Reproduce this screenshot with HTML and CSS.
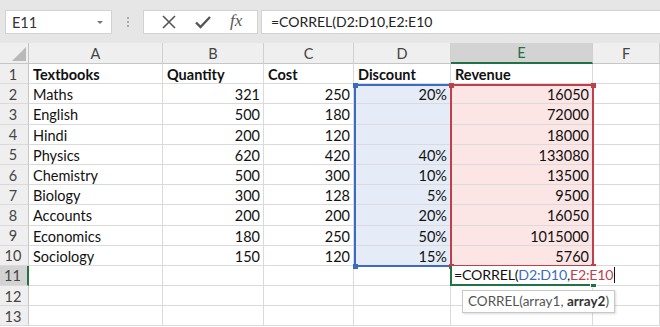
FILE: index.html
```html
<!DOCTYPE html>
<html lang="en">
<head>
    <meta charset="UTF-8">
    <title>CORREL - Excel</title>
    <link rel="stylesheet" href="styles.css">
</head>
<body>

    <div class="toolbar">
        <div class="namebox">
            <span>E11</span>
            <svg class="caret" width="8" height="5" viewBox="0 0 8 5"><path d="M1 1 L4 4 L7 1 Z" fill="#777"/></svg>
        </div>
        <div class="grip"><i></i><i></i><i></i></div>
        <div class="buttons">
            <svg width="16" height="16" viewBox="0 0 16 16"><path d="M2 2 L14 14 M14 2 L2 14" stroke="#555" stroke-width="1.6" fill="none"/></svg>
            <svg width="18" height="16" viewBox="0 0 18 16"><path d="M2 8.5 L6.5 13 L16 3" stroke="#555" stroke-width="2.4" fill="none"/></svg>
            <span class="fx">fx</span>
        </div>
        <div class="formula">=CORREL(D2:D10,E2:E10</div>
    </div>

    <div class="sheet">
        <div class="corner"><svg width="14" height="14" viewBox="0 0 14 14"><path d="M14 0 L14 14 L0 14 Z" fill="#b9b9b9"/></svg></div>
        <div class="colhead">A</div>
        <div class="colhead">B</div>
        <div class="colhead">C</div>
        <div class="colhead">D</div>
        <div class="colhead active">E</div>
        <div class="colhead">F</div>

        <div class="rowhead">1</div>
        <div class="cell b">Textbooks</div><div class="cell b">Quantity</div><div class="cell b">Cost</div><div class="cell b">Discount</div><div class="cell b">Revenue</div><div class="cell"></div>

        <div class="rowhead">2</div>
        <div class="cell">Maths</div><div class="cell n">321</div><div class="cell n">250</div><div class="cell n blue">20%</div><div class="cell n red">16050</div><div class="cell"></div>

        <div class="rowhead">3</div>
        <div class="cell">English</div><div class="cell n">500</div><div class="cell n">180</div><div class="cell n blue"></div><div class="cell n red">72000</div><div class="cell"></div>

        <div class="rowhead">4</div>
        <div class="cell">Hindi</div><div class="cell n">200</div><div class="cell n">120</div><div class="cell n blue"></div><div class="cell n red">18000</div><div class="cell"></div>

        <div class="rowhead">5</div>
        <div class="cell">Physics</div><div class="cell n">620</div><div class="cell n">420</div><div class="cell n blue">40%</div><div class="cell n red">133080</div><div class="cell"></div>

        <div class="rowhead">6</div>
        <div class="cell">Chemistry</div><div class="cell n">500</div><div class="cell n">300</div><div class="cell n blue">10%</div><div class="cell n red">13500</div><div class="cell"></div>

        <div class="rowhead">7</div>
        <div class="cell">Biology</div><div class="cell n">300</div><div class="cell n">128</div><div class="cell n blue">5%</div><div class="cell n red">9500</div><div class="cell"></div>

        <div class="rowhead">8</div>
        <div class="cell">Accounts</div><div class="cell n">200</div><div class="cell n">200</div><div class="cell n blue">20%</div><div class="cell n red">16050</div><div class="cell"></div>

        <div class="rowhead">9</div>
        <div class="cell">Economics</div><div class="cell n">180</div><div class="cell n">250</div><div class="cell n blue">50%</div><div class="cell n red">1015000</div><div class="cell"></div>

        <div class="rowhead">10</div>
        <div class="cell">Sociology</div><div class="cell n">150</div><div class="cell n">120</div><div class="cell n blue">15%</div><div class="cell n red">5760</div><div class="cell"></div>

        <div class="rowhead active">11</div>
        <div class="cell"></div><div class="cell"></div><div class="cell"></div><div class="cell"></div><div class="cell edit"><span class="edit-text">=CORREL(<span class="ref-d">D2:D10</span>,<span class="ref-e">E2:E10</span><span class="cursor"></span></span><i class="fill-handle"></i></div><div class="cell"></div>

        <div class="rowhead">12</div>
        <div class="cell"></div><div class="cell"></div><div class="cell"></div><div class="cell"></div><div class="cell"></div><div class="cell"></div>

        <div class="rowhead">13</div>
        <div class="cell"></div><div class="cell"></div><div class="cell"></div><div class="cell"></div><div class="cell"></div><div class="cell"></div>

        <!-- range outlines drawn over the grid -->
        <div class="range range-d"><i class="h tl"></i><i class="h bl"></i></div>
        <div class="range range-e"><i class="h tl"></i><i class="h tr"></i><i class="h bl"></i><i class="h br"></i></div>
        <div class="tip">CORREL(array1, <b>array2</b>)</div>
    </div>

</body>
</html>
```

FILE: styles.css
```css
body {
    margin: 0;
    background: #ffffff;
    font-family: Lato, "Liberation Sans", sans-serif;
    color: #222;
    overflow: hidden;
}
.toolbar {
    height: 43px;
    background: #e6e6e6;
    display: flex;
    align-items: flex-start;
    padding-top: 10px;
    box-sizing: border-box;
}
.namebox {
    margin-left: 5px;
    width: 107px;
    height: 24px;
    background: #fff;
    border: 1px solid #d2d2d2;
    box-sizing: border-box;
    display: flex;
    align-items: center;
    justify-content: space-between;
    padding: 0 7px 0 6px;
    font-size: 14.5px;
    color: #333;
}
.grip {
    width: 31px;
    height: 24px;
    display: flex;
    flex-direction: column;
    align-items: center;
    justify-content: center;
    gap: 2px;
}
.grip i {
    width: 2px;
    height: 2px;
    background: #a9a9a9;
}
.buttons {
    width: 115px;
    height: 24px;
    background: #fff;
    border: 1px solid #d2d2d2;
    box-sizing: border-box;
    display: flex;
    align-items: center;
    justify-content: space-around;
    padding: 0 6px 0 8px;
}
.fx {
    font-family: "Liberation Serif", serif;
    font-style: italic;
    font-size: 17px;
    color: #555;
    margin-top: -2px;
}
.formula {
    margin-left: 3px;
    flex: 1;
    height: 24px;
    background: #fff;
    border: 1px solid #d2d2d2;
    border-right: none;
    box-sizing: border-box;
    padding-left: 9px;
    font-size: 14px;
    line-height: 22px;
    color: #222;
}
.sheet {
    position: relative;
    display: grid;
    grid-template-columns: 29px 134px 101px 90px 97px 142px 1fr;
    grid-template-rows: 21px;
    grid-auto-rows: 20.2px;
}
.corner, .colhead, .rowhead {
    background: #efefef;
    color: #444;
    font-size: 14.5px;
    box-sizing: border-box;
}
.corner {
    display: flex;
    align-items: flex-end;
    justify-content: flex-end;
    padding: 0 2px 2px 0;
    border-right: 1px solid #c6c6c6;
    border-bottom: 1px solid #c6c6c6;
}
.colhead {
    display: flex;
    align-items: center;
    justify-content: center;
    border-right: 1px solid #d0d0d0;
    border-bottom: 1px solid #c6c6c6;
}
.colhead.active {
    background: #d3d3d3;
    color: #217346;
    border-bottom: 2px solid #217346;
}
.rowhead {
    display: flex;
    align-items: center;
    justify-content: center;
    border-right: 1px solid #c6c6c6;
    border-bottom: 1px solid #dadada;
    padding: 1px 2px 0 0;
}
.rowhead.active {
    background: #d3d3d3;
    border-right: 2px solid #217346;
}
.cell {
    font-size: 14.5px;
    line-height: 19px;
    padding: 1px 3px 0 4px;
    border-right: 1px solid #dadada;
    border-bottom: 1px solid #dadada;
    box-sizing: border-box;
    white-space: nowrap;
    overflow: visible;
    color: #111;
}
.cell.b {
    font-weight: bold;
}
.cell.n {
    text-align: right;
}
.cell.blue {
    background: #e5ecf7;
}
.cell.red {
    background: #fbe5e5;
}
.cell.edit {
    position: relative;
    z-index: 2;
    font-size: 14.2px;
    letter-spacing: -0.2px;
    line-height: 18px;
    padding: 0;
    border: none;
    border-left: 2px solid #217346;
    border-bottom: 2px solid #217346;
    margin-left: -1px;
    width: 144px;
}
.edit-text {
    position: relative;
    z-index: 1;
    display: inline-block;
    padding: 0 1px 0 2px;
    background: #fff;
}
.fill-handle {
    position: absolute;
    right: -3px;
    bottom: -4px;
    width: 5px;
    height: 5px;
    background: #217346;
    border: 1px solid #fff;
}
.ref-d {
    color: #3a6dc2;
}
.ref-e {
    color: #c0404a;
}
.cursor {
    display: inline-block;
    width: 1px;
    height: 16px;
    background: #111;
    vertical-align: -3px;
    margin-left: 1px;
}
.range {
    position: absolute;
    box-sizing: border-box;
    top: 41.2px;
    height: 183px;
}
.range-d {
    left: 354px;
    width: 98px;
    border: 2px solid #3a6dc2;
}
.range-e {
    left: 450px;
    width: 144px;
    border: 2px solid #c0404a;
}
.h {
    position: absolute;
    width: 5px;
    height: 5px;
}
.range-d .h { background: #3a6dc2; }
.range-e .h { background: #c0404a; }
.tl { left: -3.5px; top: -3.5px; }
.tr { right: -3.5px; top: -3.5px; }
.bl { left: -3.5px; bottom: -3.5px; }
.br { right: -3.5px; bottom: -3.5px; }
.tip {
    position: absolute;
    z-index: 3;
    left: 462px;
    top: 247px;
    height: 21px;
    padding: 0 5px;
    background: #fff;
    border: 1px solid #c8c8c8;
    box-shadow: 1px 1px 2px rgba(0, 0, 0, 0.15);
    font-size: 13.5px;
    line-height: 20px;
    color: #555;
    white-space: nowrap;
}
.tip b {
    color: #333;
}
```
